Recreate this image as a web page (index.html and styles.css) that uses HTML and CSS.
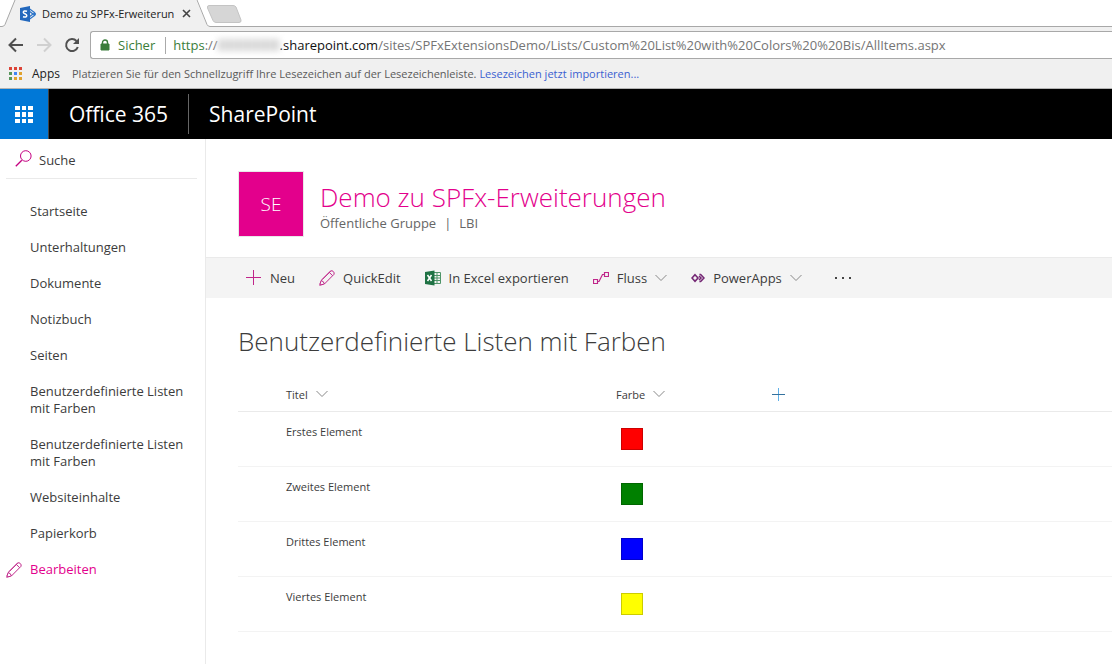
FILE: index.html
```html
<!DOCTYPE html>
<html lang="de">
<head>
<meta charset="utf-8">
<title>Demo zu SPFx-Erweiterungen</title>
<link rel="stylesheet" href="styles.css">
</head>
<body>
<svg class="defs" aria-hidden="true">
  <symbol id="pencil" viewBox="0 0 16 16"><path d="M.7 15.3 2 10.6 11.7 1Q13 .2 14.300 1.500T15 4.300L5.400 14ZM2 10.600Q4.800 11 5.400 14M10.300 2.400 13.600 5.700M3.300 9.400 11.700 1M1 13.500 2.500 15" fill="none" stroke="currentColor"/></symbol>
  <symbol id="chevron" viewBox="0 0 12 8"><path d="M.5 1 6 6.500 11.500 1" fill="none" stroke="currentColor"/></symbol>
</svg>
<header class="browser">
  <div class="tabs">
    <svg class="tab-shape" viewBox="0 0 245 28" aria-hidden="true">
      <path d="M0 27 4 26 14 2Q15 -1 18 -1H193Q196 -1 197 2L207 25Q208 27 211 27V28H0Z" fill="#f0f0f0"/>
      <path d="M0 26.500H2Q4 26.500 5 24.500L15 0M197 0 207 24.500Q208 26.500 210 26.500H245" fill="none" stroke="#a8a8a8"/>
      <path d="M209 5.500H233Q235 5.500 236 7L241 20Q241.500 22.500 239 22.500H216Q214 22.500 213 20.500L207.500 8Q207 5.500 209 5.500Z" fill="#d6d6d6" stroke="#c4c4c4"/>
    </svg>
    <div class="tab">
      <svg width="16" height="16" viewBox="0 0 16 16" aria-hidden="true"><path d="M9 2.500 14.500 6.500V9.500L9 13.500M9 5 13 8 9 11" fill="none" stroke="#2c74c8" stroke-width="1.300"/><circle cx="14.500" cy="8" r="1.500" fill="#2c74c8"/><path d="M0 2 10 0V16L0 14Z" fill="#2368bd"/><path d="M7 5.300Q3.400 4.200 3.300 6.200C3.300 8 6.800 7.600 6.800 9.700Q6.500 11.600 3 10.700" fill="none" stroke="#fff" stroke-width="1.500"/></svg>
      <span class="tab-title">Demo zu SPFx-Erweiterun</span>
      <button class="plain" aria-label="Tab schließen"><svg width="9" height="9" viewBox="0 0 9 9"><path d="M1 1 8 8M8 1 1 8" stroke="#444" stroke-width="1.600"/></svg></button>
    </div>
    <div class="strip"></div>
  </div>
  <div class="toolbar">
    <button class="plain" aria-label="Zurück"><svg width="16" height="16" viewBox="0 0 16 16"><path d="M15 8H2M8 1.500 1.500 8 8 14.500" fill="none" stroke="#505050" stroke-width="2"/></svg></button>
    <button class="plain" aria-label="Vorwärts"><svg width="16" height="16" viewBox="0 0 16 16"><path d="M1 8H14M8 1.500 14.500 8 8 14.500" fill="none" stroke="#d0d0d0" stroke-width="2"/></svg></button>
    <button class="plain" aria-label="Neu laden"><svg width="16" height="16" viewBox="0 0 16 16"><path d="M13.800 10A6 6 0 1 1 12.500 4" fill="none" stroke="#505050" stroke-width="2"/><path d="M15 1V7H9Z" fill="#505050"/></svg></button>
    <div class="address">
      <svg width="10" height="12" viewBox="0 0 10 12" aria-hidden="true"><path d="M1 5H9V11H1Z" fill="#3a7d3a" stroke="#3a7d3a"/><path d="M2.500 5V3.500A2.500 2.500 0 0 1 7.500 3.500V5" fill="none" stroke="#3a7d3a" stroke-width="1.400"/></svg>
      <span class="secure">Sicher</span>
      <div class="url" role="textbox" aria-label="Adresse"><span class="scheme">https</span>://<span class="masked"></span><b>.sharepoint.com</b>/sites/SPFxExtensionsDemo/Lists/Custom%20List%20with%20Colors%20%20Bis/AllItems.aspx</div>
    </div>
  </div>
  <div class="bookmarks">
    <button class="plain apps"><svg width="13" height="13" viewBox="0 0 13 13" aria-hidden="true"><path d="M0 0h3v3H0zM5 0h3v3H5zM10 0h3v3h-3z" fill="#dc4437"/><path d="M0 5h3v3H0zM0 10h3v3H0z" fill="#57955a"/><path d="M5 5h3v3H5z" fill="#4285f4"/><path d="M10 5h3v3h-3zM5 10h3v3H5zM10 10h3v3h-3z" fill="#e0a22e"/></svg>Apps</button>
    <span>Platzieren Sie für den Schnellzugriff Ihre Lesezeichen auf der Lesezeichenleiste. <a href="#">Lesezeichen jetzt importieren...</a></span>
  </div>
</header>
<div class="suite">
  <button class="waffle" aria-label="App-Startfeld"><svg width="18" height="17" viewBox="0 0 18 17"><path d="M0 0h5v4H0zM7 0h4v4H7zM13 0h5v4h-5zM0 6h5v5H0zM7 6h4v5H7zM13 6h5v5h-5zM0 13h5v4H0zM7 13h4v4H7zM13 13h5v4h-5z" fill="#fff"/></svg></button>
  <a class="brand" href="#">Office 365</a>
  <a class="product" href="#">SharePoint</a>
</div>
<div class="layout">
  <aside class="side">
    <label class="search"><svg width="17" height="17" viewBox="0 0 17 17" aria-hidden="true"><path d="M.8 16.200 6.800 10.200" stroke="#c40080" stroke-width="1.300"/><circle cx="10.800" cy="6" r="5.300" fill="none" stroke="#c40080"/></svg><input type="search" placeholder="Suche" aria-label="Suche"></label>
    <nav class="nav">
      <a href="#">Startseite</a>
      <a href="#">Unterhaltungen</a>
      <a href="#">Dokumente</a>
      <a href="#">Notizbuch</a>
      <a href="#">Seiten</a>
      <a href="#">Benutzerdefinierte Listen mit Farben</a>
      <a href="#">Benutzerdefinierte Listen mit Farben</a>
      <a href="#">Websiteinhalte</a>
      <a href="#">Papierkorb</a>
      <a class="edit" href="#"><svg width="16" height="16" aria-hidden="true"><use href="#pencil"/></svg>Bearbeiten</a>
    </nav>
  </aside>
  <main class="main">
    <div class="site">
      <div class="logo">SE</div>
      <div>
        <h1>Demo zu SPFx-Erweiterungen</h1>
        <p class="meta"><span>Öffentliche Gruppe</span><span>|</span><span>LBI</span></p>
      </div>
    </div>
    <div class="commands">
      <button class="plain"><svg class="pink" width="16" height="16" viewBox="0 0 16 16" aria-hidden="true"><path d="M0 7.500H15M7.500 0V15" stroke="currentColor"/></svg>Neu</button>
      <button class="plain"><svg class="pink" width="16" height="16" aria-hidden="true"><use href="#pencil"/></svg>QuickEdit</button>
      <button class="plain"><svg width="16" height="16" viewBox="0 0 16 16" aria-hidden="true"><path d="M9 2.500H15.500V13.500H9M9 5.500H15M9 8H15M9 10.500H15M12 3V13" fill="none" stroke="#4e9468"/><path d="M0 2 9.500 .5V15.500L0 14Z" fill="#1f7244"/><path d="M2.500 5 6.500 11M6.500 5 2.500 11" stroke="#fff" stroke-width="1.500"/></svg>In Excel exportieren</button>
      <button class="plain"><svg class="pink" width="16" height="14" viewBox="0 0 16 14" aria-hidden="true"><path d="M.5 8.500H4.500V12.500H.5ZM11.500 1.500H15.500V5.500H11.500ZM4.500 10.500H6L9.500 3.500H11.500" fill="none" stroke="currentColor" stroke-width="1.200"/></svg>Fluss<svg class="drop" width="12" height="8" aria-hidden="true"><use href="#chevron"/></svg></button>
      <button class="plain"><svg width="14" height="10" viewBox="0 0 14 10" aria-hidden="true"><path d="M4 1.700 7 5 4 8.300 1 5ZM8.500 1.300 9.800 1.700 13 5 9.800 8.300 8.500 8.700M8 3 10 5 8 7" fill="none" stroke="#742774" stroke-width="1.600"/></svg>PowerApps<svg class="drop" width="12" height="8" aria-hidden="true"><use href="#chevron"/></svg></button>
      <button class="plain more" aria-label="Mehr"><svg width="18" height="4" viewBox="0 0 18 4"><path d="M1 1h2v2H1zM8 1h2v2H8zM15 1h2v2h-2z" fill="#444"/></svg></button>
    </div>
    <section class="list">
      <h2>Benutzerdefinierte Listen mit Farben</h2>
      <table>
        <thead>
          <tr>
            <th class="title"><button class="plain">Titel<svg class="drop" width="12" height="8" aria-hidden="true"><use href="#chevron"/></svg></button></th>
            <th class="color"><button class="plain">Farbe<svg class="drop" width="12" height="8" aria-hidden="true"><use href="#chevron"/></svg></button></th>
            <th><button class="plain" aria-label="Spalte hinzufügen"><svg width="13" height="13" viewBox="0 0 13 13"><path d="M6.500 0V13" stroke="#60b0e8"/><path d="M0 6.500H13" stroke="#34729e"/></svg></button></th>
          </tr>
        </thead>
        <tbody>
          <tr><td class="title">Erstes Element</td><td><div class="swatch red"></div></td><td></td></tr>
          <tr><td class="title">Zweites Element</td><td><div class="swatch green"></div></td><td></td></tr>
          <tr><td class="title">Drittes Element</td><td><div class="swatch blue"></div></td><td></td></tr>
          <tr><td class="title">Viertes Element</td><td><div class="swatch yellow"></div></td><td></td></tr>
        </tbody>
      </table>
    </section>
  </main>
</div>
</body>
</html>
```
FILE: styles.css
```css
* { box-sizing: border-box; }
html, body { height: 100%; }
body {
  margin: 0;
  display: flex;
  flex-direction: column;
  background: #fff;
  color: #3c3c3c;
  font: 13px/17px "Open Sans", "Noto Sans", sans-serif;
}
svg { flex: none; display: block; }
.defs { position: absolute; width: 0; height: 0; }
.plain {
  display: flex;
  align-items: center;
  padding: 0;
  border: 0;
  background: none;
  color: inherit;
  font: inherit;
}
a { color: inherit; text-decoration: none; }

.browser { background: #f0f0f0; border-bottom: 1px solid #b4b4b4; font-size: 12px; }
.tabs { position: relative; display: flex; height: 27px; background: #fff; }
.tab-shape { position: absolute; left: 0; top: 0; width: 245px; height: 28px; }
.tab { position: relative; display: flex; align-items: center; gap: 6px; width: 210px; padding-left: 20px; color: #222; }
.tab-title { min-width: 134px; white-space: nowrap; font-size: 11px; }
.strip { flex: 1; margin-left: 35px; border-bottom: 1px solid #a8a8a8; }
.toolbar { display: flex; align-items: center; gap: 12px; padding: 4px 0 3px 8px; }
.address {
  flex: 1;
  display: flex;
  align-items: center;
  height: 28px;
  padding-left: 9px;
  background: #fff;
  border: 1px solid #a8a8a8;
  border-right: 0;
  border-radius: 3px 0 0 3px;
  font-size: 13px;
  white-space: nowrap;
}
.toolbar .address { margin-left: -2px; }
.secure { margin-left: 8px; padding-right: 10px; border-right: 1px solid #aaa; color: #3a7d3a; }
.url { display: flex; align-items: center; padding-left: 7px; color: #757575; }
.url b { color: #111; font-weight: 400; }
.scheme { color: #3a7d3a; }
.masked {
  width: 62px;
  height: 12px;
  background: repeating-linear-gradient(90deg, #d4d4d4 0 5px, #e2e2e2 5px 9px);
  filter: blur(3px);
}
.bookmarks { display: flex; align-items: center; gap: 12px; height: 26px; padding: 0 0 3px 9px; color: #5a5a5a; font-size: 11px; }
.bookmarks a { color: #3b5fd0; }
.apps { gap: 10px; color: #222; font-size: 12px; }

.suite { display: flex; align-items: center; height: 50px; flex: none; background: #000; color: #fff; font-size: 21px; line-height: 40px; }
.waffle { display: flex; align-items: center; justify-content: center; width: 49px; height: 50px; padding: 0; border: 0; border-right: 1px solid #444; background: #0078d7; }
.brand { padding: 0 20px; border-right: 1px solid #666; }
.product { padding: 0 20px; }

.layout { display: flex; flex: 1; }
.side { width: 206px; flex: none; padding: 0 8px 0 6px; border-right: 1px solid #eaeaea; }
.search { display: flex; align-items: center; gap: 7px; height: 40px; padding-left: 9px; border-bottom: 1px solid #eaeaea; }
.search input { width: 100%; padding: 3px 0 0; border: 0; outline: 0; background: none; font: inherit; }
.search input::placeholder { color: #3c3c3c; opacity: 1; }
.nav { display: flex; flex-direction: column; gap: 19px; padding-top: 24px; }
.nav a { padding-left: 24px; }
.nav .edit { display: flex; align-items: center; gap: 8px; padding-left: 0; color: #e3008c; }
.nav svg, .pink { color: #c0268a; }

.main { flex: 1; min-width: 0; }
.site { display: flex; gap: 16px; height: 118px; padding: 32px 32px 0; }
.logo { display: flex; align-items: center; justify-content: center; width: 66px; height: 66px; border: 1px solid #e8e8e8; background: #e3008c; color: #fff; font-size: 19px; font-weight: 300; }
h1, h2 { margin: 0; font-size: 26px; line-height: 36px; font-weight: 300; }
h1 { padding-top: 8px; color: #e3008c; }
.meta { display: flex; gap: 8px; margin: 0; color: #666; }
.commands { display: flex; align-items: center; gap: 24px; height: 41px; padding-left: 40px; border-top: 1px solid #eaeaea; background: #f4f4f4; }
.commands .plain { gap: 8px; }
.commands .more { margin-left: 8px; }
.drop { color: #888; }

.list { padding: 25px 0 0 32px; }
table { width: 100%; margin-top: 17px; border-collapse: collapse; table-layout: fixed; font-size: 11px; }
th { height: 35px; padding: 2px 0 0; border-bottom: 1px solid #eaeaea; font-weight: 400; text-align: left; }
th .plain { gap: 8px; }
td { height: 55px; padding: 11px 0 0; border-bottom: 1px solid #f3f3f3; vertical-align: top; }
.title { width: 378px; padding-left: 48px; }
.color { width: 156px; }
.swatch { width: 22px; height: 22px; margin: 5px 0 0 5px; border: 1px solid; }
.red { background: #f00; border-color: #c00; }
.green { background: #008000; border-color: #006600; }
.blue { background: #00f; border-color: #00c; }
.yellow { background: #ff0; border-color: #cc0; }
```
